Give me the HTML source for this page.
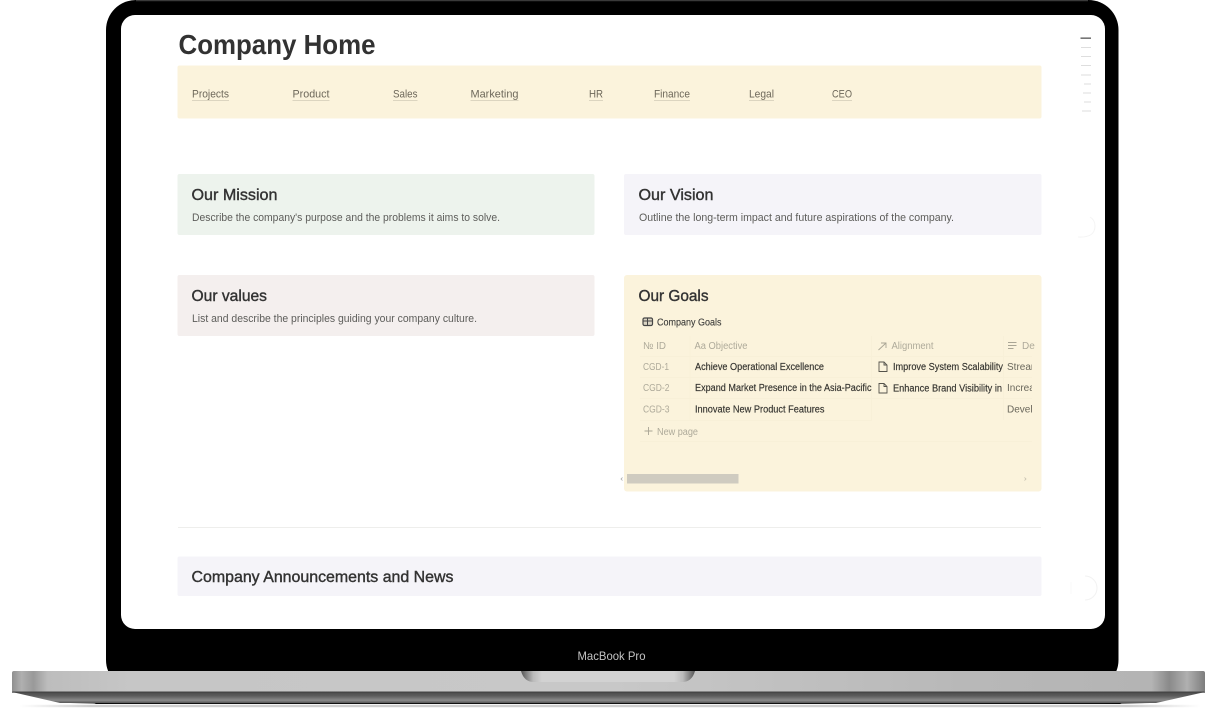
<!DOCTYPE html>
<html><head><meta charset="utf-8"><style>
html,body{margin:0;padding:0;background:#fff;width:1216px;height:711px;overflow:hidden}
svg{display:block;position:absolute;left:0;top:0}
text{font-family:"Liberation Sans",sans-serif}
</style></head><body>
<svg width="1216" height="711" viewBox="0 0 1216 711" xmlns="http://www.w3.org/2000/svg">
<defs>
<linearGradient id="base" x1="0" x2="1" y1="0" y2="0">
<stop offset="0" stop-color="#8f8f8f"/><stop offset=".008" stop-color="#b0b0b0"/><stop offset=".018" stop-color="#999"/><stop offset=".03" stop-color="#bdbdbd"/><stop offset=".1" stop-color="#c6c6c6"/><stop offset=".5" stop-color="#c8c8c8"/><stop offset=".8" stop-color="#b8b8b8"/><stop offset=".955" stop-color="#b4b4b4"/><stop offset=".97" stop-color="#8a8a8a"/><stop offset=".985" stop-color="#b0b0b0"/><stop offset="1" stop-color="#7d7d7d"/>
</linearGradient>
<linearGradient id="low" x1="0" x2="0" y1="0" y2="1">
<stop offset="0" stop-color="#4a4a4a"/><stop offset=".35" stop-color="#5c5c5c"/><stop offset=".75" stop-color="#8a8a8a"/><stop offset="1" stop-color="#555"/>
</linearGradient>
<linearGradient id="notch" x1="0" x2="1" y1="0" y2="0">
<stop offset="0" stop-color="#555"/><stop offset=".07" stop-color="#bbb"/><stop offset=".12" stop-color="#d2d2d2"/><stop offset=".88" stop-color="#d2d2d2"/><stop offset=".93" stop-color="#bbb"/><stop offset="1" stop-color="#555"/>
</linearGradient>
<linearGradient id="sh" x1="0" x2="1" y1="0" y2="0">
<stop offset="0" stop-color="#fff"/><stop offset=".06" stop-color="#999"/><stop offset=".94" stop-color="#999"/><stop offset="1" stop-color="#fff"/>
</linearGradient>
<filter id="b"><feGaussianBlur stdDeviation=".35"/></filter>
<filter id="b2"><feGaussianBlur stdDeviation=".6"/></filter>
</defs>

<!-- shadow -->
<rect x="20" y="705" width="1180" height="2" fill="url(#sh)" filter="url(#b2)" opacity=".6"/>
<!-- laptop lid -->
<rect x="106" y="0" width="1012.500" height="690" rx="30" fill="#000"/>
<path d="M136 .6H1088" stroke="#3a3a3a" stroke-width="1.200" fill="none"/>
<!-- base -->
<path d="M60 693 H1156 L1120 704 H96 Z" fill="#000"/>
<path d="M12 692 L60 703 H1156 L1205 692 Z" fill="url(#low)"/>
<path d="M70 703 L120 704 H1100 L1150 703 Z" fill="#111"/>
<path d="M14 671 H1203 Q1205 671 1205 673 V691 L1204 692 H13 L12 691 V673 Q12 671 14 671 Z" fill="url(#base)"/>
<path d="M521 671 H695 Q692 682 682 682 H534 Q524 682 521 671 Z" fill="url(#notch)"/>
<rect x="12" y="691.500" width="1193" height="1.200" fill="#444"/>
<!-- screen -->
<rect x="121" y="15" width="984" height="614" rx="14" fill="#fff"/>
<text x="611.500" y="660" text-anchor="middle" font-size="12" fill="#c4c4c4" textLength="68" lengthAdjust="spacingAndGlyphs">MacBook Pro</text>

<!-- content -->
<g filter="url(#b)">
<text x="178.500" y="54" font-size="28" font-weight="700" fill="#333" textLength="197" lengthAdjust="spacingAndGlyphs">Company Home</text>

<rect x="177.500" y="65.500" width="864" height="53" rx="2" fill="#fbf3dc"/>
<g font-size="11" fill="#6d675a">
<text x="192" y="97.500" textLength="37" lengthAdjust="spacingAndGlyphs">Projects</text>
<text x="292.500" y="97.500" textLength="37" lengthAdjust="spacingAndGlyphs">Product</text>
<text x="393" y="97.500" textLength="24.500" lengthAdjust="spacingAndGlyphs">Sales</text>
<text x="470.500" y="97.500" textLength="48" lengthAdjust="spacingAndGlyphs">Marketing</text>
<text x="589" y="97.500" textLength="14" lengthAdjust="spacingAndGlyphs">HR</text>
<text x="654" y="97.500" textLength="36" lengthAdjust="spacingAndGlyphs">Finance</text>
<text x="749" y="97.500" textLength="25" lengthAdjust="spacingAndGlyphs">Legal</text>
<text x="832" y="97.500" textLength="20" lengthAdjust="spacingAndGlyphs">CEO</text>
</g>
<g stroke="#dcd5c0" stroke-width="1">
<path d="M192 100.500h37M292.500 100.500h37M393 100.500h24.500M470.500 100.500h48M589 100.500h14M654 100.500h36M749 100.500h25M832 100.500h20"/>
</g>

<rect x="177.500" y="174" width="417" height="61" rx="2" fill="#edf3ed"/>
<text x="191.500" y="200" font-size="16" fill="#333" stroke="#333" stroke-width=".4" textLength="86" lengthAdjust="spacingAndGlyphs">Our Mission</text>
<text x="192" y="221" font-size="11" fill="#5d5d5a" textLength="308" lengthAdjust="spacingAndGlyphs">Describe the company's purpose and the problems it aims to solve.</text>

<rect x="624" y="174" width="417.500" height="61" rx="2" fill="#f5f4f9"/>
<text x="638.500" y="200" font-size="16" fill="#333" stroke="#333" stroke-width=".4" textLength="75" lengthAdjust="spacingAndGlyphs">Our Vision</text>
<text x="639" y="221" font-size="11" fill="#5d5d5a" textLength="315" lengthAdjust="spacingAndGlyphs">Outline the long-term impact and future aspirations of the company.</text>

<rect x="177.500" y="275" width="417" height="61" rx="2" fill="#f4efee"/>
<text x="191.500" y="301" font-size="16" fill="#333" stroke="#333" stroke-width=".4" textLength="75.500" lengthAdjust="spacingAndGlyphs">Our values</text>
<text x="192" y="322" font-size="11" fill="#5d5d5a" textLength="285" lengthAdjust="spacingAndGlyphs">List and describe the principles guiding your company culture.</text>

<rect x="624" y="275" width="417.500" height="216.500" rx="3" fill="#fbf3dc"/>
<text x="638.500" y="301" font-size="16" fill="#333" stroke="#333" stroke-width=".4" textLength="70" lengthAdjust="spacingAndGlyphs">Our Goals</text>

<!-- table icon -->
<rect x="643" y="318" width="9.500" height="7.500" rx="1.500" fill="#777" fill-opacity=".25" stroke="#444" stroke-width="1.200"/>
<path d="M643 321h9.500M647.500 318v7.500" stroke="#444" stroke-width="1"/>
<text x="657" y="325.500" font-size="10" fill="#3a3a38" stroke="#3a3a38" stroke-width=".1" textLength="64.500" lengthAdjust="spacingAndGlyphs">Company Goals</text>

<g stroke="#f8f0d8" stroke-width="1" fill="none">
<path d="M640 356.500H1032M640 377.500H1032M640 398.500H1032M640 420.500H872M640 441.500H1032"/>
<path d="M690 336V420M871.500 336V420M1003.500 336V420"/>
</g>

<g font-size="10" fill="#aeaa9a">
<text x="643" y="349" textLength="23" lengthAdjust="spacingAndGlyphs">№ ID</text>
<text x="694.500" y="349" textLength="53" lengthAdjust="spacingAndGlyphs">Aa Objective</text>
<text x="891.500" y="349" textLength="42" lengthAdjust="spacingAndGlyphs">Alignment</text>
<text x="1022" y="349">De</text>
<text x="643" y="370" textLength="26" lengthAdjust="spacingAndGlyphs">CGD-1</text>
<text x="643" y="391" textLength="26.500" lengthAdjust="spacingAndGlyphs">CGD-2</text>
<text x="643" y="412.500" textLength="26.500" lengthAdjust="spacingAndGlyphs">CGD-3</text>
<text x="657" y="435" textLength="41" lengthAdjust="spacingAndGlyphs">New page</text>
</g>
<path d="M878.500 350L886 343M881 343h5v5" stroke="#a9a595" stroke-width=".9" fill="none"/>
<path d="M1008 342.500h8.500M1008 345.500h8.500M1008 348.500h5.500" stroke="#a9a595" stroke-width=".9" fill="none"/>
<path d="M648.500 427v8M644.500 431h8" stroke="#a9a595" stroke-width=".9" fill="none"/>

<g font-size="10" fill="#33322e" stroke="#33322e" stroke-width=".15">
<text x="695" y="370" textLength="129" lengthAdjust="spacingAndGlyphs">Achieve Operational Excellence</text>
<text x="695" y="391" textLength="176.500" lengthAdjust="spacingAndGlyphs">Expand Market Presence in the Asia-Pacific</text>
<text x="695" y="412.500" textLength="129.500" lengthAdjust="spacingAndGlyphs">Innovate New Product Features</text>
<svg x="892" y="355" width="111" height="40">
<text x="1" y="15" textLength="110" lengthAdjust="spacingAndGlyphs">Improve System Scalability</text>
<text x="1" y="36.500" textLength="109" lengthAdjust="spacingAndGlyphs">Enhance Brand Visibility in</text>
</svg>
</g>
<g font-size="10" fill="#6a675c">
<svg x="1007" y="355" width="25" height="65">
<text x="0" y="15">Streamline</text>
<text x="0" y="36">Increase</text>
<text x="0" y="57.500">Develop</text>
</svg>
</g>
<g fill="none" stroke="#55534c" stroke-width=".9">
<path d="M879 362h5l3 3v6.500h-8zM884 362v3h3"/>
<path d="M879 383.500h5l3 3v6.500h-8zM884 383.500v3h3"/>
</g>

<!-- scrollbar -->
<rect x="627" y="474" width="111.500" height="9.500" fill="#cfcbc0"/>
<path d="M622.500 477.500l-1.500 1.500 1.500 1.500" stroke="#aaa" fill="none" stroke-width=".8"/>
<path d="M1024.500 477.500l1.500 1.500-1.500 1.500" stroke="#c4bfae" fill="none" stroke-width=".8"/>

<!-- divider -->
<rect x="178" y="527" width="863" height="1" fill="#eeeeec"/>

<rect x="177.500" y="556.500" width="864" height="39.500" rx="2" fill="#f5f4f9"/>
<text x="191.500" y="582" font-size="16" fill="#333" stroke="#333" stroke-width=".4" textLength="262" lengthAdjust="spacingAndGlyphs">Company Announcements and News</text>

<!-- outline -->
<rect x="1080.500" y="37.500" width="10.500" height="1.300" fill="#555"/>
<g fill="#dedede">
<rect x="1081" y="47" width="10" height="1"/>
<rect x="1081" y="56" width="10" height="1"/>
<rect x="1081" y="65" width="10" height="1"/>
<rect x="1081" y="74.500" width="10" height="1"/>
<rect x="1084" y="83.500" width="7" height="1"/>
<rect x="1083" y="92.500" width="8" height="1"/>
<rect x="1084" y="101.500" width="7" height="1"/>
<rect x="1082" y="110.500" width="9" height="1"/>
</g>
<!-- faint circles -->
<path d="M1078 237 Q1095 238 1095 226 Q1095 220 1090 217" fill="none" stroke="#f4f4f4"/>
<path d="M1085 576 A12 12 0 0 1 1085 600" fill="none" stroke="#f2f2f2"/>
<path d="M1071 582 V594" fill="none" stroke="#f8f8f8"/>
</g>
</svg>
</body></html>
